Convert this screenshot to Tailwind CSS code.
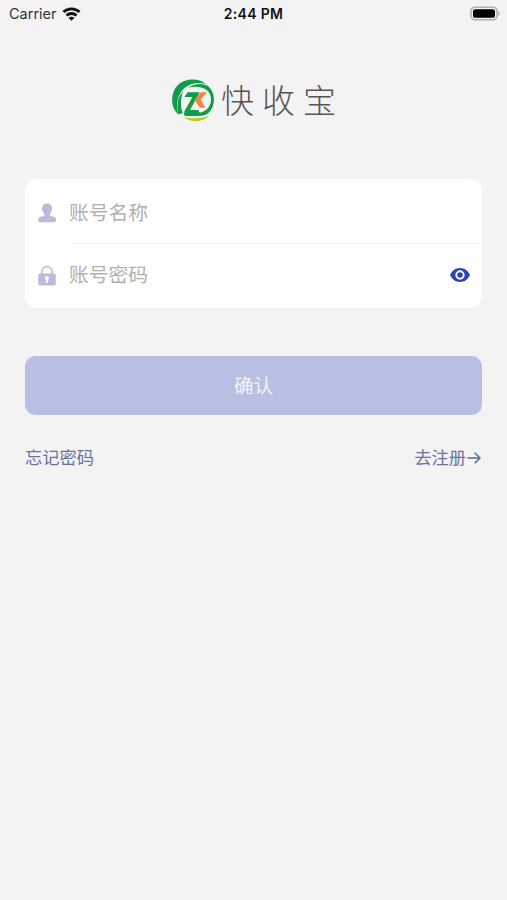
<!DOCTYPE html>
<html lang="zh-CN">
<head>
    <meta charset="UTF-8">
    <meta name="viewport" content="width=device-width, initial-scale=1.0">
    <title>快收宝</title>
    <script src="https://cdn.jsdelivr.net/npm/@tailwindcss/browser@4"></script>
</head>
<body class="min-h-screen bg-[#f3f3f3] font-['Inter','Noto_Sans_CJK_SC',sans-serif]">
    <!-- Status bar -->
    <header class="grid h-7 grid-cols-3 items-center pl-[9px] pr-[7px] text-[#111]">
        <div class="flex items-center gap-[5px]">
            <span class="text-[14.5px] leading-none text-[#333]">Carrier</span>
            <svg class="mb-px h-[14px] w-[19px]" viewBox="0 0 18 14" fill="none" stroke="#111" stroke-width="2.8">
                <path d="M1 5.1C5.4.7 12.6.7 17 5.1"/>
                <path d="M4 8.5c2.8-2.7 7.2-2.7 10 0"/>
                <path d="M9 13.8 6.1 10.9c1.6-1.5 4.2-1.5 5.8 0z" fill="#111" stroke="none"/>
            </svg>
        </div>
        <span class="pr-[2px] text-center text-[14px] font-semibold leading-none tracking-[0.3px]">2:44 PM</span>
        <svg class="mb-[2px] h-[15px] w-[30px] justify-self-end" viewBox="0 0 30 15">
            <rect x="1" y="1.2" width="26" height="12.6" rx="4" fill="#f3f3f3" stroke="#b0b0b0" stroke-width="1.6"/>
            <rect x="3" y="3.2" width="22" height="8.6" rx="2" fill="#000"/>
            <path d="M28.3 5.2c2 .9 2 3.7 0 4.6z" fill="#a5a5a5"/>
        </svg>
    </header>

    <main class="px-[25px]">
        <h1 class="mt-[50px] flex h-[46px] items-center justify-center gap-[6px]">
            <svg class="h-[44px] w-[44px]" viewBox="0 0 44 44">
                <!-- ring -->
                <path d="M7.500 35.500C-.5 29-1 15 6 7C13-.8 27-1.500 35 5C29 3.300 20 3.600 13.500 9C6.500 15 4.500 26 7.500 35.500z" fill="#109c48"/>
                <path d="M17 8.500C25 4 32 4.300 37 7C45 14 44.500 27 38 33.500C34.500 36.500 31 37.300 26 37L14 37L12.500 34.500L27 34C35 33 39.500 28 40 21C40.300 11.500 32 5.500 17 8.500z" fill="#109c48"/>
                <path d="M7.500 35.500C5.500 27 6.500 18 12 12C9.500 20 9 28 12 34z" fill="#109c48"/>
                <!-- letters -->
                <path d="M16.500 13.300H28.800L19 31H27L30 36H13L13.500 32L21.500 18H13.500z" fill="#109c48"/>
                <path d="M30 13.300H36L29.500 20.500L34.500 28.800H29L23.500 21z" fill="#f58242"/>
                <path d="M13 38C20 40 31 39.800 38 36.800C32.500 43.500 19 44 13 38z" fill="#b5cf20"/>
            </svg>
            <span class="-mr-2 pb-1 font-['KaiTi','STKaiti','Noto_Sans_CJK_SC',sans-serif] text-[33px] font-light leading-none tracking-[8px] text-[#555]">快收宝</span>
        </h1>

        <form>
            <div class="mt-[55px] h-[129px] rounded-[12px] bg-white pl-[13px] pr-[2px]">
                <label class="flex h-[64px] items-center">
                    <svg class="mt-1 h-[20px] w-[18px] shrink-0" viewBox="0 0 18 20" fill="#bbbcdb">
                        <path d="M9 .5c3.300 0 5 2 5 5 0 2.300-.9 4.300-2.200 5.500v2l4 .8c1.500.5 2.200 1.500 2.200 3 0 1.800-.8 2.500-2.200 2.500H2.400C1 19.300.2 18.600.2 16.800c0-1.500.7-2.500 2.200-3l4-.8v-2C5.100 9.800 4 7.800 4 5.500c0-3 1.700-5 5-5z"/>
                    </svg>
                    <input type="text" placeholder="账号名称" class="ml-[13px] w-full pt-[6px] text-[19.800px] outline-none placeholder:text-[#b0b0b0]">
                </label>
                <div class="ml-[33px] h-px bg-[#f0f0f0]"></div>
                <label class="flex h-[62px] items-center pr-[10px]">
                    <svg class="h-[21px] w-[18px] shrink-0" viewBox="0 0 18 21">
                        <path d="M4 9V6.500a5 5 0 0 1 10 0V9" fill="none" stroke="#bbbcdb" stroke-width="1.600"/>
                        <path fill="#bbbcdb" fill-rule="evenodd" d="M2 8.500h14q1.800 0 1.800 1.800v8.400q0 1.800-1.800 1.800H2q-1.800 0-1.800-1.800v-8.400Q.2 8.500 2 8.500zM9 11a2 2 0 0 0-1 3.700v3h2v-3A2 2 0 0 0 9 11z"/>
                    </svg>
                    <input type="password" placeholder="账号密码" class="ml-[13px] w-full pt-[2px] text-[19.800px] outline-none placeholder:text-[#b0b0b0]">
                    <button type="button" class="shrink-0">
                        <svg class="h-[14px] w-[20px]" viewBox="0 0 20 14">
                            <path d="M10 0c4.600 0 8.300 2.800 9.900 7-1.600 4.200-5.300 7-9.900 7S1.700 11.200.1 7C1.700 2.800 5.400 0 10 0z" fill="#2c44b3"/>
                            <circle cx="10" cy="7" r="3.700" fill="#2c44b3" stroke="#fff" stroke-width="1.900"/>
                        </svg>
                    </button>
                </label>
            </div>

            <button type="button" class="mt-[48px] block h-[59px] w-full rounded-[10px] bg-[#b8bfe3] pt-[3px] text-[19.500px] text-[#f3f4fc]">确认</button>
        </form>

        <div class="mt-[29px] flex items-center justify-between text-[17.300px] leading-7 text-[#69739f]">
            <a href="#">忘记密码</a>
            <a href="#" class="flex items-center pr-px">去注册
                <svg class="h-[14px] w-[15px]" viewBox="0 0 15 14" fill="none" stroke="#5d6896" stroke-width="1.500">
                    <path d="M1.500 7H14M8.700 1.700 14 7l-5.300 5.300"/>
                </svg>
            </a>
        </div>
    </main>
</body>
</html>
